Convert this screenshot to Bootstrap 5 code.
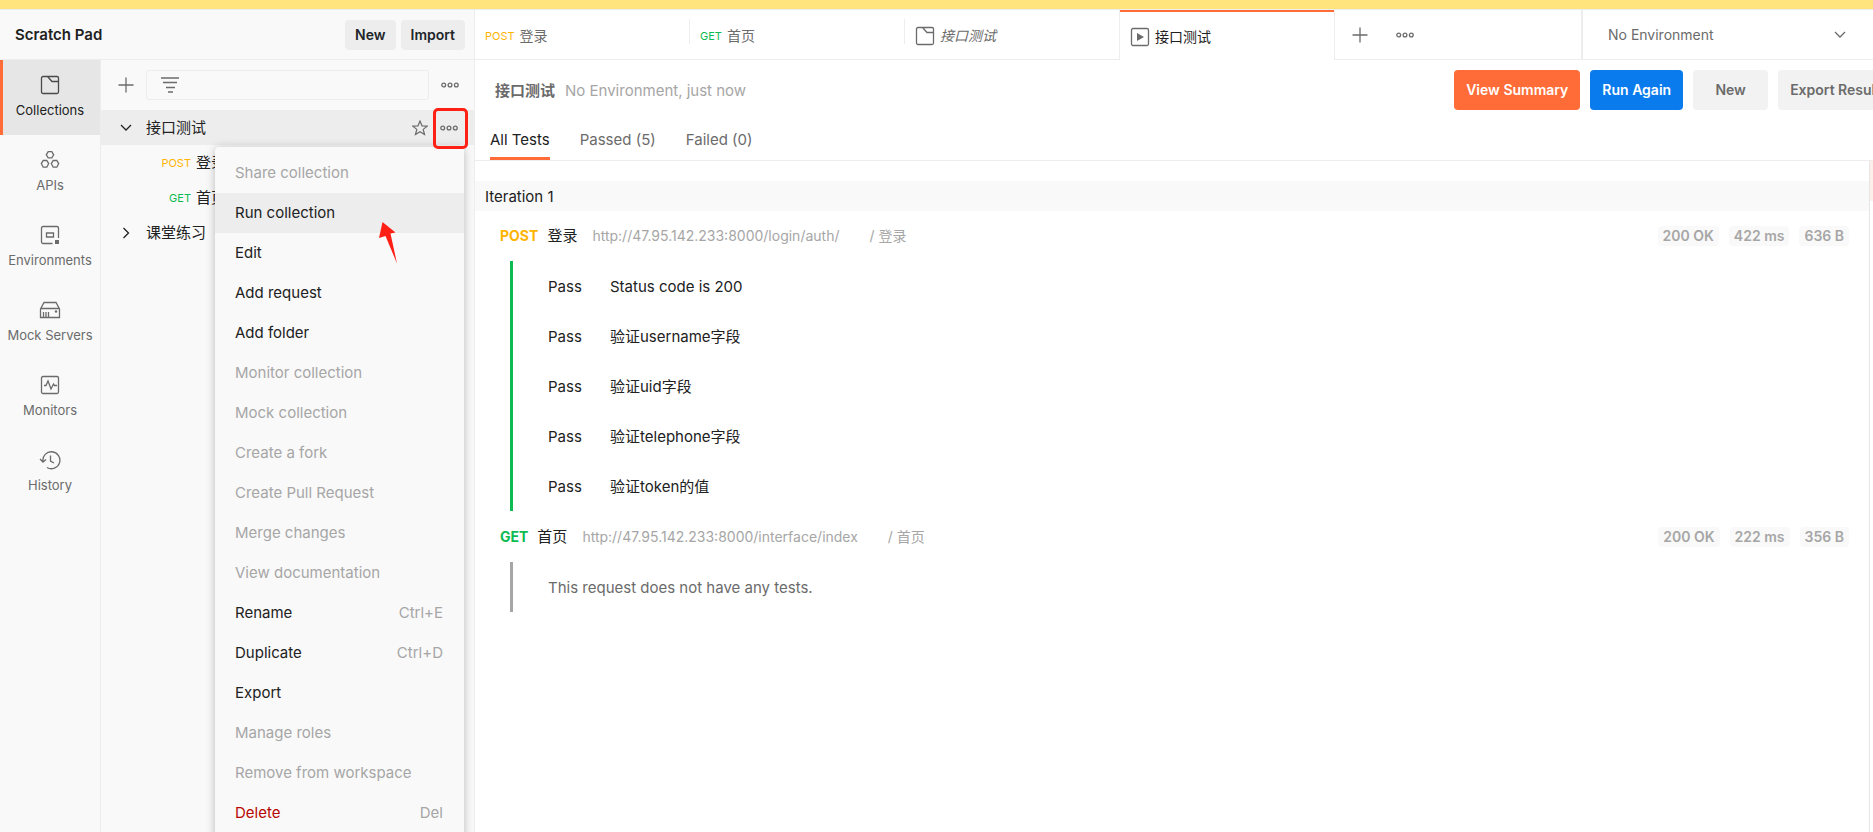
<!DOCTYPE html>
<html lang="zh-CN">
<head>
<meta charset="utf-8">
<meta name="viewport" content="width=device-width, initial-scale=1">
<title>Scratch Pad</title>
<link href="https://cdn.jsdelivr.net/npm/bootstrap@5.3.0/dist/css/bootstrap.min.css" rel="stylesheet">
<style>
:root{--line:#ededed;--panel:#f9f9f9;--ink:#212121;--muted:#6b6b6b;--faint:#a6a6a6;--orange:#ff6c37;--get:#0cbb52;--post:#ffb400}
body{font-family:Inter,"Noto Sans CJK SC",sans-serif;font-size:15px;line-height:20px;color:var(--ink);background:#fff}
button{font:inherit;color:inherit}
svg{display:block;fill:none;stroke:currentColor;flex:none}
.app{height:100vh}
.fill{min-width:0;min-height:0}
.tone-muted{color:var(--muted)}
.tone-faint{color:var(--faint)}
.notice{height:10px;background:#ffe47e;border-bottom:1px solid var(--line)}

/* left side */
.side{width:475px;background:var(--panel);border-right:1px solid var(--line)}
.side-head{height:50px;gap:5px;padding:0 9px 0 15px;border-bottom:1px solid var(--line)}
.side-head .btn{height:30px;padding:0 10px;border:0;border-radius:4px;background:#ededed;font-size:14px;font-weight:600;line-height:20px}
.rail{width:101px;border-right:1px solid var(--line)}
.rail a{height:75px;padding-top:15px;color:var(--muted);font-size:13px;text-decoration:none;gap:5px}
.rail a.on{background:#e6e6e6;color:var(--ink);box-shadow:inset 3px 0 var(--orange)}
.rail a svg{color:var(--muted)}
.rail a.on svg{color:#4a4a4a}
.icon-btn{border:0;background:none;padding:0;color:var(--muted)}
.tools{height:50px;gap:12px;padding:0 15px 0 17px}
.filter{height:30px;border:1px solid var(--line);border-radius:3px;padding-left:14px;color:var(--muted)}
.filter input{border:0;background:none;outline:0;min-width:0}
.tree-row{height:35px;gap:12px;padding-left:17px}
.tree-row.on{background:#ededed;padding-right:16px}
.tree-row.leaf{gap:5px}
.verb{font-size:11px}
.leaf .verb{width:73px;text-align:right}
.post{color:var(--post)}
.get{color:var(--get)}
.more-mark{right:6px;top:-2px;width:35px;height:41px;border:3px solid #ff2015;border-radius:5px;pointer-events:none;z-index:4}
.ctx{left:114px;right:10px;top:37px;padding:6px 0;background:var(--panel);border-radius:4px;box-shadow:0 1px 10px rgba(0,0,0,.26);z-index:3}
.ctx button{height:40px;padding:0 21px 0 20px;border:0;background:none;text-align:left}
.ctx button:disabled{color:var(--faint)}
.ctx .on{background:#ededed}
.ctx .danger{color:#b70700}
.ctx kbd{font:inherit;color:var(--faint);background:none;padding:0}
.pointer{left:164px;top:75px;color:#ff2015}

/* tabs */
.tabs{height:50px;border-bottom:1px solid var(--line)}
.tab{width:215px;height:50px;gap:5px;padding:3px 10px 0;color:var(--muted);font-size:14px;text-decoration:none;border-bottom:1px solid var(--line)}
.tab .rule{width:1px;height:25px;margin:-9px -10px 0 auto;background:var(--line)}
.tab.on{color:var(--ink);border:solid var(--line);border-width:0 1px;width:216px;margin-left:-1px;background:#fff;box-shadow:inset 0 2px var(--orange)}
.tab-tools{gap:28px;padding-left:17px}
.env{width:292px;padding-right:27px;border-left:2px solid var(--line);color:var(--muted)}
.env select{appearance:none;border:0;background:none;padding:0 0 0 25px;font-size:14px;color:inherit;outline:0}

/* report; the action row runs past the right edge of the pane */
.report-head{height:60px;width:calc(100% + 27px);padding:0 0 0 20px;gap:10px}
.report-head .btn{height:40px;border:0;border-radius:4px;font-size:14px;font-weight:600;padding:0 12px;line-height:20px}
.report-head .title{padding-top:2px}
.report-head .btn-new{width:75px}
.btn-summary,.btn-summary:hover{background:var(--orange);color:#fff}
.btn-again,.btn-again:hover{background:#097bed;color:#fff}
.btn-plain,.btn-plain:hover{background:#f2f2f2;color:var(--muted)}
.filters{height:41px;padding-left:15px;gap:30px;border-bottom:1px solid var(--line)}
.filters a{height:40px;padding-top:10px;color:var(--muted);text-decoration:none}
.filters a.on{color:var(--ink);box-shadow:inset 0 -3px var(--orange)}
.results{padding-top:20px}
.minimap{width:4px;margin-top:0;border-left:1px solid #e6e6e6}
.minimap div{height:40px;background:#ffefec}
.iter{height:30px;padding:6px 10px 4px;background:var(--panel)}
.req{height:50px;padding:0 20px 0 25px;font-size:14px;color:var(--faint)}
.req .nm{font-size:15px;color:var(--ink);margin:0 15px 0 9px}
.req .path{margin-left:30px}
.chips{gap:10px}
.chip{height:20px;padding:0 5px;border-radius:4px;background:var(--panel);font-weight:600}
.tests{margin-left:35px;border-left:3px solid var(--get)}
.tests + .req{margin-bottom:1px;padding-top:2px}
.tests li{height:50px;padding:2px 0 0 35px}
.tests li span{width:62px}
.tests.none{border-color:var(--faint);color:var(--muted)}
</style>
</head>
<body>
<svg width="0" height="0" class="position-absolute" aria-hidden="true">
<symbol id="dots" viewBox="0 0 18 6"><g stroke-width="1.3"><circle cx="2.700" cy="3" r="1.900"/><circle cx="9" cy="3" r="1.900"/><circle cx="15.300" cy="3" r="1.900"/></g></symbol>
<symbol id="plus" viewBox="0 0 16 16"><path d="M8 .5v15M.5 8h15" stroke-width="1.3"/></symbol>
<symbol id="folder" viewBox="0 0 20 20"><path d="M3 1.500h14a1.500 1.500 0 0 1 1.500 1.500v14a1.500 1.500 0 0 1-1.500 1.500H3A1.500 1.500 0 0 1 1.500 17V3A1.500 1.500 0 0 1 3 1.500zM7.500 1.500l4.500 5h6.500" stroke-width="1.3"/></symbol>
<symbol id="down" viewBox="0 0 12 8"><path d="M1 1l5 5 5-5" stroke-width="1.3"/></symbol>
</svg>
<div class="app d-flex flex-column overflow-hidden">
<div class="notice flex-shrink-0"></div>
<div class="fill d-flex flex-grow-1">
<aside class="side d-flex flex-column flex-shrink-0">
 <header class="side-head d-flex align-items-center flex-shrink-0">
  <span class="fw-semibold me-auto">Scratch Pad</span>
  <button class="btn" type="button">New</button>
  <button class="btn" type="button">Import</button>
 </header>
 <div class="d-flex flex-grow-1">
 <nav class="rail flex-shrink-0" aria-label="Workspace">
  <a href="#" class="on d-flex flex-column align-items-center"><svg width="20" height="20"><use href="#folder"/></svg>Collections</a>
  <a href="#" class="d-flex flex-column align-items-center"><svg width="20" height="20" stroke-width="1.3"><path d="M8.200 1.700h3.600l1.900 3.100-1.900 3.100H8.200L6.300 4.800zM3.200 10.500h3.600l1.900 3.100-1.900 3.600H3.200l-1.900-3.600zM13.200 10.500h3.600l1.900 3.100-1.900 3.600h-3.600l-1.900-3.600z"/></svg>APIs</a>
  <a href="#" class="d-flex flex-column align-items-center"><svg width="20" height="20" stroke-width="1.3"><path d="M12.500 18.500H3A1.500 1.500 0 0 1 1.500 17V3A1.500 1.500 0 0 1 3 1.500h14A1.500 1.500 0 0 1 18.500 3v10M6.500 8h7v4h-7z"/><path d="M15 15h4v4h-4z" fill="currentColor" stroke="none"/></svg>Environments</a>
  <a href="#" class="d-flex flex-column align-items-center"><svg width="22" height="20" stroke-width="1.3"><path d="M1.500 9L5 2.500h12L20.500 9v8.500h-19zM1.500 8.500h19M4.500 17v-5M7 17v-5M9.500 17v-5"/><circle cx="17" cy="11.500" r="1.200" fill="currentColor" stroke="none"/></svg>Mock Servers</a>
  <a href="#" class="d-flex flex-column align-items-center"><svg width="20" height="20" stroke-width="1.3"><rect x="1.500" y="1.500" width="17" height="17" rx="1.500"/><path d="M4 10.500h2L8 6l3 8 2.500-5 1 1.500H17"/></svg>Monitors</a>
  <a href="#" class="d-flex flex-column align-items-center"><svg width="22" height="20" stroke-width="1.3"><path d="M4 11.500A8.500 8.500 0 1 1 8 17.500M1 9l3 3 3-2.500M11.500 5.500v5.500l3.500 2"/></svg>History</a>
 </nav>
 <div class="fill flex-grow-1">
  <div class="tools d-flex align-items-center">
   <button class="icon-btn" type="button" aria-label="Add"><svg width="16" height="16"><use href="#plus"/></svg></button>
   <label class="filter d-flex align-items-center flex-grow-1"><svg width="18" height="16" stroke-width="1.3"><path d="M0 1h18M2 5.500h14M5 10.500h9M7 15h5"/></svg><input class="flex-grow-1" type="text" aria-label="Filter"></label>
   <button class="icon-btn" type="button" aria-label="More"><svg width="18" height="6"><use href="#dots"/></svg></button>
  </div>
  <div class="position-relative">
   <div class="tree-row on d-flex align-items-center">
    <svg width="16" height="10" viewBox="-2 -1 16 10"><use href="#down" width="12" height="8"/></svg><span class="me-auto">接口测试</span>
    <button class="icon-btn" type="button" aria-label="Favourite"><svg width="16" height="16" stroke-width="1.2"><path d="M8 1l2 4.800 5.200.3-4 3.300 1.300 5.100L8 11.700l-4.500 2.800 1.300-5.100-4-3.300L6 5.800z"/></svg></button>
    <button class="icon-btn" type="button" aria-label="Collection actions"><svg width="18" height="6"><use href="#dots"/></svg></button>
   </div>
   <div class="more-mark position-absolute"></div>
   <div class="tree-row leaf d-flex align-items-center"><span class="verb post">POST</span>登录</div>
   <div class="tree-row leaf d-flex align-items-center"><span class="verb get">GET</span>首页</div>
   <div class="tree-row d-flex align-items-center"><svg width="16" height="12" stroke-width="1.3"><path d="M5.500 1l5 5-5 5"/></svg>课堂练习</div>
   <div class="ctx position-absolute d-flex flex-column">
    <button type="button" disabled>Share collection</button>
    <button type="button" class="on">Run collection</button>
    <button type="button">Edit</button>
    <button type="button">Add request</button>
    <button type="button">Add folder</button>
    <button type="button" disabled>Monitor collection</button>
    <button type="button" disabled>Mock collection</button>
    <button type="button" disabled>Create a fork</button>
    <button type="button" disabled>Create Pull Request</button>
    <button type="button" disabled>Merge changes</button>
    <button type="button" disabled>View documentation</button>
    <button type="button" class="d-flex align-items-center justify-content-between">Rename<kbd>Ctrl+E</kbd></button>
    <button type="button" class="d-flex align-items-center justify-content-between">Duplicate<kbd>Ctrl+D</kbd></button>
    <button type="button">Export</button>
    <button type="button" disabled>Manage roles</button>
    <button type="button" disabled>Remove from workspace</button>
    <button type="button" class="danger d-flex align-items-center justify-content-between">Delete<kbd>Del</kbd></button>
    <svg class="pointer position-absolute" width="18" height="42"><path d="M3.500 0L16.500 10.500 11.500 11.500 18 41.500 6.500 14 0 16z" fill="currentColor" stroke="none"/></svg>
   </div>
  </div>
 </div>
 </div>
</aside>
<main class="fill flex-grow-1 d-flex flex-column overflow-hidden">
 <div class="tabs d-flex flex-shrink-0">
  <a href="#" class="tab d-flex align-items-center"><span class="verb post">POST</span>登录<span class="rule"></span></a>
  <a href="#" class="tab d-flex align-items-center"><span class="verb get">GET</span>首页<span class="rule"></span></a>
  <a href="#" class="tab d-flex align-items-center"><svg width="20" height="20"><use href="#folder"/></svg><i>接口测试</i></a>
  <a href="#" class="tab on d-flex align-items-center"><svg class="tone-muted" width="20" height="20" stroke-width="1.3"><rect x="1.500" y="1.500" width="17" height="17" rx="1.500"/><path d="M7 6l7 4-7 4z" fill="currentColor" stroke="none"/></svg>接口测试</a>
  <div class="tab-tools d-flex align-items-center">
   <button class="icon-btn" type="button" aria-label="New tab"><svg width="16" height="16"><use href="#plus"/></svg></button>
   <button class="icon-btn" type="button" aria-label="Tab actions"><svg width="18" height="6"><use href="#dots"/></svg></button>
  </div>
  <div class="env ms-auto d-flex align-items-center"><select class="flex-grow-1" aria-label="Environment"><option>No Environment</option></select><svg width="12" height="8"><use href="#down"/></svg></div>
 </div>
 <div class="report-head d-flex align-items-center flex-shrink-0">
  <strong class="title tone-muted">接口测试</strong><span class="title me-auto tone-faint">No Environment, just now</span>
  <button class="btn btn-summary" type="button">View Summary</button>
  <button class="btn btn-again" type="button">Run Again</button>
  <button class="btn btn-plain btn-new" type="button">New</button>
  <button class="btn btn-plain" type="button">Export Results</button>
 </div>
 <nav class="filters d-flex flex-shrink-0" aria-label="Test results"><a href="#" class="on">All Tests</a><a href="#">Passed (5)</a><a href="#">Failed (0)</a></nav>
 <div class="d-flex flex-grow-1">
 <section class="results flex-grow-1">
  <div class="iter">Iteration 1</div>
  <div class="req d-flex align-items-center"><b class="post">POST</b><span class="nm">登录</span><span>http://47.95.142.233:8000/login/auth/</span><span class="path me-auto">/ 登录</span><div class="chips d-flex"><span class="chip">200 OK</span><span class="chip">422 ms</span><span class="chip">636 B</span></div></div>
  <ul class="tests list-unstyled mb-0">
   <li class="d-flex align-items-center"><span>Pass</span>Status code is 200</li>
   <li class="d-flex align-items-center"><span>Pass</span>验证username字段</li>
   <li class="d-flex align-items-center"><span>Pass</span>验证uid字段</li>
   <li class="d-flex align-items-center"><span>Pass</span>验证telephone字段</li>
   <li class="d-flex align-items-center"><span>Pass</span>验证token的值</li>
  </ul>
  <div class="req d-flex align-items-center"><b class="get">GET</b><span class="nm">首页</span><span>http://47.95.142.233:8000/interface/index</span><span class="path me-auto">/ 首页</span><div class="chips d-flex"><span class="chip">200 OK</span><span class="chip">222 ms</span><span class="chip">356 B</span></div></div>
  <ul class="tests none list-unstyled mb-0"><li class="d-flex align-items-center">This request does not have any tests.</li></ul>
 </section>
 <div class="minimap"><div></div></div>
 </div>
</main>
</div>
</div>
<script src="https://cdn.jsdelivr.net/npm/bootstrap@5.3.0/dist/js/bootstrap.bundle.min.js"></script>
</body>
</html>
